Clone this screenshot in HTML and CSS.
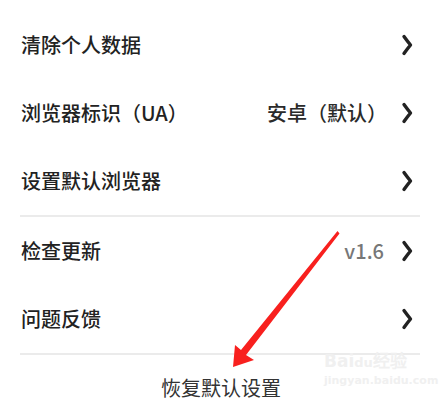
FILE: index.html
```html
<!DOCTYPE html>
<html lang="zh-CN">
<head>
    <meta charset="UTF-8">
    <meta name="viewport" content="width=device-width, initial-scale=1.0">
    <title>设置</title>
    <link rel="stylesheet" href="styles.css">
</head>
<body>
    <main class="settings">
        <section class="group">
            <div class="row">
                <span class="label">清除个人数据</span>
                <svg class="chevron" viewBox="0 0 12 22"><path d="M3 2.5 Q7 8 9.5 11 Q7 14 3 19.5"/></svg>
            </div>
            <div class="row">
                <span class="label">浏览器标识（UA）</span>
                <span class="value">安卓（默认）</span>
                <svg class="chevron" viewBox="0 0 12 22"><path d="M3 2.5 Q7 8 9.5 11 Q7 14 3 19.5"/></svg>
            </div>
            <div class="row">
                <span class="label">设置默认浏览器</span>
                <svg class="chevron" viewBox="0 0 12 22"><path d="M3 2.5 Q7 8 9.5 11 Q7 14 3 19.5"/></svg>
            </div>
        </section>

        <section class="group">
            <div class="row">
                <span class="label">检查更新</span>
                <span class="value version">v1.6</span>
                <svg class="chevron" viewBox="0 0 12 22"><path d="M3 2.5 Q7 8 9.5 11 Q7 14 3 19.5"/></svg>
            </div>
            <div class="row">
                <span class="label">问题反馈</span>
                <svg class="chevron" viewBox="0 0 12 22"><path d="M3 2.5 Q7 8 9.5 11 Q7 14 3 19.5"/></svg>
            </div>
        </section>

        <div class="reset">恢复默认设置</div>
    </main>

    <!-- annotation arrow drawn over the screenshot -->
    <svg class="annotation" viewBox="0 0 442 403">
        <polygon points="337.5,231 339.5,233.5 246,355 254,360 233,367 235,345 241,350"/>
    </svg>

    <div class="watermark">
        <div class="wm-logo">Bai<span class="wm-paw">du</span>经验</div>
        <div class="wm-url">jingyan.baidu.com</div>
    </div>
</body>
</html>
```

FILE: styles.css
```css
body {
    margin: 0;
    background: #fff;
    font-family: "Noto Sans CJK SC", "Noto Sans", sans-serif;
    color: #222;
    width: 442px;
    height: 403px;
    overflow: hidden;
    position: relative;
}
.settings {
    padding-top: 11px;
}
.group {
    margin: 0 22px 0 20px;
    border-bottom: 2px solid #ebebeb;
}
.row {
    height: 68px;
    display: flex;
    align-items: center;
    gap: 14px;
    margin-right: 7px;
}
.label {
    font-size: 20px;
    font-weight: 500;
    line-height: 24px;
    margin-left: 1px;
    flex: 1;
}
.value {
    font-size: 20px;
    font-weight: 500;
    line-height: 24px;
    color: #2a2a2a;
}
.version {
    color: #777;
    margin-right: 3px;
}
.chevron {
    width: 12px;
    height: 22px;
    flex: none;
}
.chevron path {
    fill: none;
    stroke: #222;
    stroke-width: 3.4;
    stroke-linecap: round;
    stroke-linejoin: round;
}
.reset {
    width: 176px;
    margin: 21px auto 0;
    text-align: center;
    font-size: 20px;
    line-height: 24px;
    padding-bottom: 3px;
    color: #333;
    border-bottom: 1px solid #e8e8e8;
}
.annotation {
    position: absolute;
    top: 0;
    left: 0;
    width: 442px;
    height: 403px;
    pointer-events: none;
}
.annotation polygon {
    fill: #f8201e;
}
.watermark {
    position: absolute;
    left: 324px;
    top: 350px;
    color: #f0f0f0;
    font-family: "DejaVu Sans", sans-serif;
    pointer-events: none;
}
.wm-logo {
    font-size: 17px;
    font-weight: bold;
    line-height: 22px;
}
.wm-paw {
    font-size: 13px;
}
.wm-url {
    font-size: 11px;
    line-height: 14px;
    font-weight: bold;
}
```
